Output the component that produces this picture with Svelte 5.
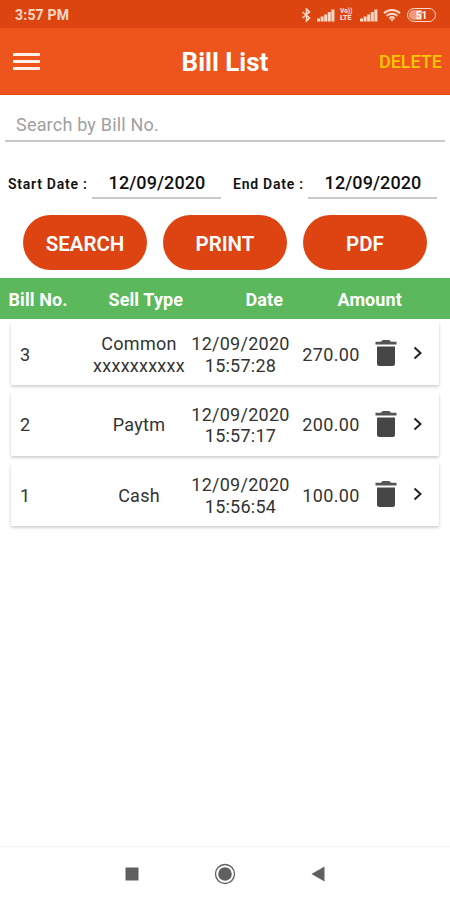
<script>
	let query = '';
	let startDate = '12/09/2020';
	let endDate = '12/09/2020';

	const actions = ['SEARCH', 'PRINT', 'PDF'];
	const bills = [
		{ no: 3, type: ['Common', 'xxxxxxxxxx'], date: '12/09/2020', time: '15:57:28', amount: '270.00' },
		{ no: 2, type: ['Paytm'], date: '12/09/2020', time: '15:57:17', amount: '200.00' },
		{ no: 1, type: ['Cash'], date: '12/09/2020', time: '15:56:54', amount: '100.00' }
	];
</script>

{#snippet signal()}
	<svg width="18" height="13" viewBox="0 0 18 13" fill="currentColor">
		<path d="M0 9.500h3v3H0zM3.600 7.500h3v5h-3zM7.200 5.500h3v7h-3zM10.800 3h3v9.500h-3zM14.400 .5h3v12h-3z" />
	</svg>
{/snippet}

<div class="screen">
	<div class="status">
		<span class="clock">3:57 PM</span>
		<div class="indicators">
			<svg class="bluetooth" width="11" height="14" viewBox="0 0 11 14" fill="none" stroke="currentColor" stroke-width="1.6">
				<path d="M1.500 4l7 6-3 3V1l3 3-7 6" />
			</svg>
			{@render signal()}
			<span class="volte"><span>Vo))</span><span>LTE</span></span>
			{@render signal()}
			<svg class="wifi" width="18" height="14" viewBox="0 0 18 14" fill="none" stroke="currentColor" stroke-width="2">
				<path d="M1 5.200a11.500 11.500 0 0 1 16 0M3.700 7.900a7.600 7.600 0 0 1 10.600 0M6.300 10.400a4 4 0 0 1 5.400 0" />
				<path d="M7.300 11.600L9 13.400l1.700-1.800a2.500 2.500 0 0 0-3.400 0z" fill="currentColor" stroke="none" />
			</svg>
			<span class="battery"><span>51</span></span>
		</div>
	</div>

	<header>
		<button class="menu" aria-label="Menu"><i></i><i></i><i></i></button>
		<h1>Bill List</h1>
		<button class="delete">DELETE</button>
	</header>

	<input class="search" placeholder="Search by Bill No." bind:value={query} />

	<div class="dates">
		<label for="start">Start Date :</label>
		<input id="start" bind:value={startDate} />
		<label for="end">End Date :</label>
		<input id="end" bind:value={endDate} />
	</div>

	<div class="actions">
		{#each actions as action}
			<button>{action}</button>
		{/each}
	</div>

	<div class="table-head">
		<span>Bill No.</span>
		<span>Sell Type</span>
		<span>Date</span>
		<span>Amount</span>
	</div>

	<div class="list">
		{#each bills as bill}
			<div class="card">
				<span class="no">{bill.no}</span>
				<span>
					{#each bill.type as line}
						<div>{line}</div>
					{/each}
				</span>
				<span>
					<div>{bill.date}</div>
					<div>{bill.time}</div>
				</span>
				<span class="amount">{bill.amount}</span>
				<svg class="trash" width="22" height="28" viewBox="0 0 22 28">
					<path d="M2 7.500h18v17a2.500 2.500 0 0 1-2.500 2.500h-13A2.500 2.500 0 0 1 2 24.500z" fill="#464646" />
					<path d="M.5 2.800h5.300L7.800 1h6.400l2 1.800h5.300v2.700H.5z" fill="#555" />
				</svg>
				<svg class="chevron" width="12" height="16" viewBox="0 0 12 16" fill="none" stroke="#222" stroke-width="2">
					<path d="M2.500 2.500L8.500 8l-6 5.500" />
				</svg>
			</div>
		{/each}
	</div>

	<nav>
		<svg width="14" height="14" viewBox="0 0 14 14"><path d="M.5 .5h13v13H.5z" fill="#606060" /></svg>
		<svg width="22" height="22" viewBox="0 0 22 22">
			<circle cx="11" cy="11" r="9.500" fill="none" stroke="#606060" stroke-width="1.300" />
			<circle cx="11" cy="11" r="6.800" fill="#606060" />
		</svg>
		<svg width="14" height="16" viewBox="0 0 14 16"><path d="M13.500 .5v15L.5 8z" fill="#606060" /></svg>
	</nav>
</div>

<style>
	:global(body) {
		background: #fff;
	}
	.screen {
		display: flex;
		flex-direction: column;
		width: 100%;
		height: 100vh;
		overflow: hidden;
		font-family: Roboto, sans-serif;
		color: #333;
	}
	.screen * {
		box-sizing: border-box;
	}
	button {
		border: 0;
		padding: 0;
		background: none;
		font-family: inherit;
	}
	input {
		border: 0;
		border-bottom: 2px solid #c8c8c8;
		border-radius: 0;
		outline: 0;
		background: none;
		font-family: inherit;
	}
	svg {
		display: block;
		flex: none;
	}
	.status {
		display: flex;
		justify-content: space-between;
		align-items: center;
		flex: none;
		height: 28px;
		padding: 2px 14px 0 15px;
		background: #dc4510;
		color: #ffd9ca;
	}
	.clock {
		font-size: 14px;
		font-weight: 700;
		letter-spacing: 0.2px;
	}
	.indicators {
		display: flex;
		align-items: center;
	}
	.bluetooth {
		margin-right: 5px;
	}
	.volte {
		display: flex;
		flex-direction: column;
		width: 14px;
		margin: 0 6px 0 5px;
		font-size: 7px;
		font-weight: 900;
		line-height: 7px;
	}
	.volte span {
		line-height: 7px;
	}
	.volte span:first-child {
		font-size: 6.500px;
	}
	.wifi {
		margin: 0 6px 0 5px;
	}
	.battery {
		display: flex;
		width: 29px;
		height: 14px;
		padding: 1px;
		border: 1.500px solid currentColor;
		border-radius: 7px;
	}
	.battery span {
		flex: 1;
		border-radius: 5px;
		background: linear-gradient(90deg, #f09a7b 52%, transparent 52%);
		color: #fff;
		font-size: 10px;
		font-weight: 700;
		line-height: 11px;
		text-align: center;
	}
	header {
		display: grid;
		grid-template-columns: 1fr auto 1fr;
		align-items: center;
		flex: none;
		height: 67px;
		padding: 0 8px 0 13px;
		border-bottom: 1px solid #e54a14;
		background: #ed551d;
	}
	.menu {
		display: flex;
		flex-direction: column;
		gap: 4px;
		width: 27px;
	}
	.menu i {
		height: 3px;
		background: #fff0e8;
	}
	h1 {
		margin: 2px 5px 0 0;
		color: #fff;
		font-size: 26px;
		font-weight: 700;
		line-height: 32px;
	}
	.delete {
		justify-self: end;
		margin-top: 1px;
		color: #ffc800;
		font-size: 18px;
		font-weight: 500;
	}
	.search {
		flex: none;
		height: 43px;
		margin: 4px 5px 0;
		padding: 9px 11px 0;
		font-size: 18px;
		letter-spacing: 0.2px;
	}
	.search::placeholder {
		color: #a0a0a0;
		opacity: 1;
	}
	.dates {
		display: grid;
		grid-template-columns: 84px 129px 75px 129px;
		flex: none;
		height: 30px;
		margin-top: 27px;
		padding-left: 8px;
	}
	.dates label {
		padding-top: 6px;
		font-size: 14px;
		font-weight: 600;
		line-height: 18px;
		letter-spacing: 0.75px;
		white-space: nowrap;
		color: #111;
	}
	.dates label:nth-of-type(2) {
		margin-left: 12px;
	}
	.dates input {
		width: 129px;
		height: 30px;
		padding: 0 0 1px 1px;
		font-size: 18px;
		font-weight: 500;
		text-align: center;
		letter-spacing: 0.1px;
		color: #111;
	}
	#end {
		margin-left: 12px;
	}
	.actions {
		display: flex;
		justify-content: center;
		gap: 16px;
		flex: none;
		margin: 16px 0 8px;
	}
	.actions button {
		width: 124px;
		height: 55px;
		padding-top: 2px;
		border-radius: 28px;
		background: #dd4411;
		color: #fff;
		font-size: 20.500px;
		font-weight: 600;
	}
	.table-head {
		display: grid;
		grid-template-columns: 100px 137px 92px 1fr;
		align-items: center;
		flex: none;
		height: 41px;
		padding: 2px 8px 0 8.500px;
		background: #5bb85c;
		color: #fff;
		font-size: 18px;
		font-weight: 700;
		letter-spacing: 0.1px;
	}
	.list {
		display: flex;
		flex-direction: column;
		gap: 6.500px;
		flex: 1;
		padding: 2px 11px 0;
	}
	.card {
		display: grid;
		grid-template-columns: 77px 102px 101px 80px 29px 36px;
		align-items: center;
		height: 64px;
		padding-top: 3px;
		background: #fff;
		box-shadow: 0 1.500px 3px rgba(0, 0, 0, 0.22);
		font-size: 18px;
		line-height: 21.500px;
		letter-spacing: 0.25px;
		text-align: center;
	}
	.no {
		padding-left: 9px;
		text-align: left;
	}
	.amount {
		letter-spacing: 0.4px;
	}
	.trash,
	.chevron {
		justify-self: center;
		margin-bottom: 3px;
	}
	nav {
		display: grid;
		grid-template-columns: 88px 98px 88px;
		justify-content: center;
		justify-items: center;
		align-items: center;
		flex: none;
		height: 54px;
		border-top: 1px solid #f3f3f3;
	}
</style>
